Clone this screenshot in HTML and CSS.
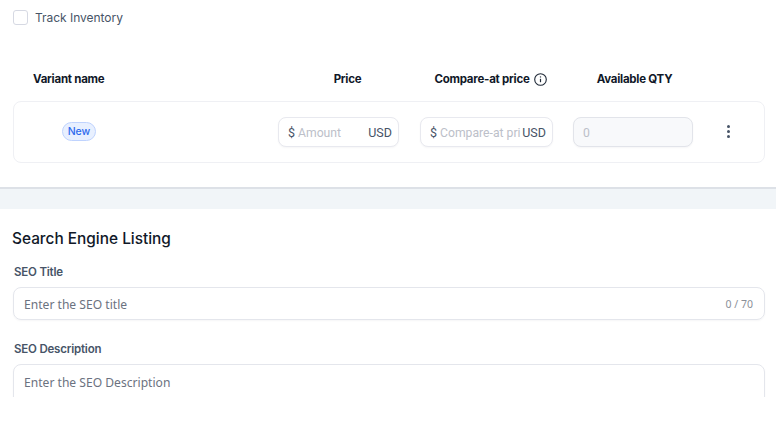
FILE: index.html
```html
<!DOCTYPE html>
<html lang="en">
<head>
<meta charset="utf-8">
<title>Variant and SEO</title>
<link rel="stylesheet" href="styles.css">
</head>
<body>
<main class="page">
  <section class="inventory">
    <label class="track"><span class="checkbox"></span><span>Track Inventory</span></label>
    <div class="head">
      <div class="h-name">Variant name</div>
      <div class="h-center">Price</div>
      <div class="h-center h-compare">Compare-at price
        <svg class="info" width="13" height="13" viewBox="0 0 13 13" fill="none" stroke="#1f2937"><circle cx="6.5" cy="6.5" r="5.8" stroke-width="1.1"/><path d="M6.5 5.8v3.4" stroke-width="1.2"/><path d="M6.5 3.4v1.1" stroke-width="1.2"/></svg>
      </div>
      <div class="h-center">Available QTY</div>
    </div>
    <div class="card">
      <div class="name-cell"><span class="badge">New</span></div>
      <div class="field"><span class="sym">$</span><span class="ph">Amount</span><span class="cur">USD</span></div>
      <div class="field compare"><span class="sym">$</span><span class="ph">Compare-at pri</span><span class="cur">USD</span></div>
      <div class="field disabled"><span class="ph">0</span></div>
      <div class="more"><i></i><i></i><i></i></div>
    </div>
  </section>
  <div class="band"></div>
  <section class="seo">
    <h2>Search Engine Listing</h2>
    <div class="label first">SEO Title</div>
    <div class="box title-box"><span class="box-ph">Enter the SEO title</span><span class="count">0 / 70</span></div>
    <div class="label second">SEO Description</div>
    <div class="box desc-box"><span class="box-ph">Enter the SEO Description</span></div>
  </section>
</main>
</body>
</html>
```
FILE: styles.css
```css
* { box-sizing: border-box; }
html, body { margin: 0; background: #fff; }
body { font-family: Inter, "Liberation Sans", sans-serif; }
.page { height: 397px; overflow: hidden; }
.inventory { height: 187px; padding: 10px 11px 0 13px; }
.track { display: flex; align-items: center; gap: 7px; height: 15px; font-size: 12px; line-height: 15px; color: #475467; letter-spacing: -0.03px; }
.checkbox { width: 15px; height: 15px; border: 1px solid #d6d9e3; border-radius: 3px; background: #fff; }
.head { display: grid; grid-template-columns: 254px 121px 125px 123px; column-gap: 20px; margin-top: 46px; height: 16px; align-items: center; font-size: 11.5px; font-weight: 700; line-height: 16px; color: #101828; letter-spacing: -0.25px; }
.h-name { padding-left: 20px; }
.h-center { display: flex; justify-content: center; align-items: center; white-space: nowrap; }
.h-compare { gap: 4px; }
.info { flex: none; }
.card { display: grid; grid-template-columns: 244px 121px 134px 120px 1fr; column-gap: 20px; margin-top: 14px; height: 62px; width: 752px; border: 1px solid #eff0f4; border-radius: 8px; align-items: center; }
.name-cell { padding-left: 48px; display: flex; align-items: center; margin-top: -1px; }
.badge { width: 34px; height: 19px; display: flex; align-items: center; justify-content: center; border: 1px solid #bfd3fe; border-radius: 10px; background: #e8f0ff; color: #2f6bed; font-size: 10.5px; font-weight: 500; }
.field { height: 30px; display: flex; align-items: center; padding: 0 6px 0 9px; border: 1px solid #e8e9ef; border-radius: 8px; background: #fff; font: 12.5px Roboto, sans-serif; box-shadow: 0 1px 2px rgba(16,24,40,.04); }
.compare { margin-left: 1px; min-width: 0; }
.sym { color: #475467; margin-right: 3px; flex: none; }
.ph { color: #bcc0c9; flex: 1 1 0; min-width: 0; white-space: nowrap; font-size: 12.2px; padding-top: 1px; }
.cur { color: #475467; margin-left: 1px; flex: none; }
.disabled { background: #f8f9fb; border-color: #e2e4ea; }
.more { display: flex; flex-direction: column; align-items: center; gap: 2px; margin-top: -1px; padding-right: 21px; }
.more i { width: 3px; height: 3px; border-radius: 50%; background: #475467; }
.band { height: 22px; background: #f1f5f8; border-top: 2px solid #dde1e7; }
.seo { padding: 0 11px 0 13px; }
h2 { margin: 0 0 0 -1px; padding-top: 20px; font-size: 15.4px; font-weight: 500; line-height: 19px; color: #101828; }
.label { font-size: 11.5px; font-weight: 600; line-height: 14px; color: #475467; padding-left: 1px; letter-spacing: -0.2px; }
.label.first { margin-top: 17px; }
.label.second { margin-top: 22px; }
.box { margin-top: 8px; width: 752px; border: 1px solid #e4e6ec; border-radius: 8px; padding: 0 11px 0 10px; display: flex; justify-content: space-between; align-items: center; font: 12.1px "Noto Sans", sans-serif; box-shadow: 0 1px 2px rgba(16,24,40,.04); }
.title-box { height: 33px; padding-top: 1px; }
.desc-box { height: 60px; align-items: flex-start; padding-top: 9px; }
.box-ph { color: #6b7280; }
.count { font-size: 10.5px; color: #8a8f98; }
```
